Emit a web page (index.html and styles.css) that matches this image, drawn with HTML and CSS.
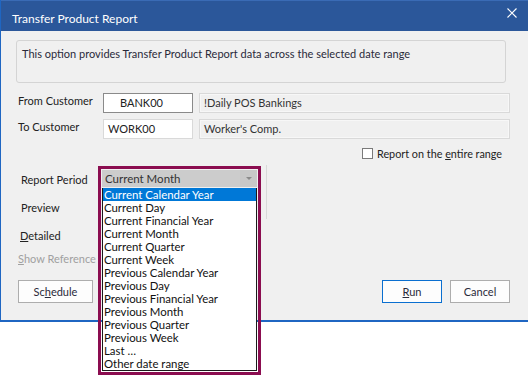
FILE: index.html
```html
<!DOCTYPE html>
<html>
<head>
<meta charset="utf-8">
<link rel="stylesheet" href="styles.css">
</head>
<body>
<div class="window">
  <div class="titlebar">
    <span class="title">Transfer Product Report</span>
    <svg class="close" width="10" height="10" viewBox="0 0 10 10"><path d="M0.5 0.5 L9.5 9.5 M9.5 0.5 L0.5 9.5" stroke="#fff" stroke-width="1.1" fill="none"/></svg>
  </div>
  <div class="content">
    <div class="desc">This option provides Transfer Product Report data across the selected date range</div>

    <div class="field-row first">
      <span class="field-label">From Customer</span>
      <div class="code code-focus">BANK00</div>
      <div class="name">!Daily POS Bankings</div>
    </div>
    <div class="field-row second">
      <span class="field-label">To Customer</span>
      <div class="code">WORK00</div>
      <div class="name">Worker's Comp.</div>
    </div>

    <div class="check-row">
      <span class="checkbox"></span>
      <span class="check-label">Report on the <u>e</u>ntire range</span>
    </div>

    <div class="lower">
      <div class="labels">
        <div class="lbl">Report Period</div>
        <div class="lbl">Preview</div>
        <div class="lbl lbl-det"><u>D</u>etailed</div>
        <div class="lbl lbl-show"><u>S</u>how Reference</div>
      </div>
      <div class="combo-col">
        <div class="combo">
          <span class="combo-text">Current Month</span>
          <span class="combo-btn"><span class="arrow"></span></span>
          <div class="frame"></div>
          <ul class="list">
            <li class="sel">Current Calendar Year</li>
            <li>Current Day</li>
            <li>Current Financial Year</li>
            <li>Current Month</li>
            <li>Current Quarter</li>
            <li>Current Week</li>
            <li>Previous Calendar Year</li>
            <li>Previous Day</li>
            <li>Previous Financial Year</li>
            <li>Previous Month</li>
            <li>Previous Quarter</li>
            <li>Previous Week</li>
            <li>Last …</li>
            <li>Other date range</li>
          </ul>
        </div>
      </div>
      <div class="sep"></div>
    </div>

    <div class="buttons">
      <div class="btn btn-sched">Sc<u>h</u>edule</div>
      <div class="btn btn-run"><u>R</u>un</div>
      <div class="btn btn-cancel">Cancel</div>
    </div>
  </div>
</div>
</body>
</html>
```
FILE: styles.css
```css
html, body {
  margin: 0;
  padding: 0;
  background: #ffffff;
}
body {
  font-family: "Lato", "Open Sans", sans-serif;
  font-size: 11px;
  color: #222;
  width: 528px;
  height: 376px;
  overflow: hidden;
}
.window {
  width: 528px;
  height: 322px;
  box-sizing: border-box;
  background: #f0f0f0;
  border-left: 1px solid #1f66c2;
  border-bottom: 2px solid #1f66c2;
}
.titlebar {
  height: 31px;
  background: #2b579a;
  border-top: 1px solid #3a6bb5;
  box-sizing: border-box;
  display: flex;
  justify-content: space-between;
  align-items: flex-start;
  padding: 0 11px 0 11px;
  color: #fff;
}
.title {
  font-size: 12px;
  margin-top: 11px;
  line-height: 14px;
}
.close {
  margin-top: 7px;
}
.content {
  padding: 9px 18px 0 15px;
}
.desc {
  width: 490px;
  height: 43px;
  box-sizing: border-box;
  border: 1px solid #d4d4d4;
  border-radius: 3px;
  padding: 6px 5px;
  line-height: 14px;
  color: #2a2a3a;
}
.field-row {
  display: flex;
  align-items: flex-start;
  height: 20px;
}
.field-row.first { margin-top: 10px; }
.field-row.second { margin-top: 6px; }
.field-label {
  width: 85px;
  margin-left: 2px;
  line-height: 14px;
  padding-top: 1px;
}
.code {
  width: 90px;
  height: 20px;
  box-sizing: border-box;
  background: #fff;
  border: 1px solid #d9d9d9;
  padding-left: 4px;
  line-height: 18px;
  color: #222;
}
.code-focus {
  border-color: #8a8a8a;
  padding-left: 16px;
}
.name {
  width: 311px;
  height: 20px;
  margin-left: 6px;
  box-sizing: border-box;
  background: #f0f0f0;
  border: 1px solid #d9d9d9;
  box-shadow: inset 0 0 0 1px #f7f7f7;
  padding-left: 4px;
  line-height: 18px;
  color: #333;
}
.check-row {
  display: flex;
  align-items: center;
  margin-top: 9px;
  margin-left: 346px;
  height: 11px;
}
.checkbox {
  width: 11px;
  height: 11px;
  box-sizing: border-box;
  border: 1px solid #7a7a7a;
  background: #fff;
}
.check-label {
  margin-left: 4px;
  line-height: 14px;
  font-size: 10.8px;
  white-space: nowrap;
}
.lower {
  display: flex;
  align-items: flex-start;
  margin-top: 6px;
}
.labels {
  width: 86px;
}
.lbl {
  height: 28px;
  box-sizing: border-box;
  padding-top: 8px;
  padding-left: 5px;
  line-height: 14px;
  white-space: nowrap;
}
.lbl-det { padding-left: 4px; }
.lbl-show {
  height: 23px;
  padding-top: 3px;
  padding-left: 2px;
  color: #a0a0a0;
  width: 81px;
  overflow: hidden;
}
.combo-col {
  width: 155px;
  padding-top: 5px;
}
.combo {
  position: relative;
  height: 17px;
  background: #cccccc;
  display: flex;
  align-items: center;
  justify-content: space-between;
  z-index: 2;
}
.combo-text {
  padding-left: 3px;
  color: #333;
  font-size: 11.5px;
  line-height: 14px;
}
.combo-btn {
  width: 17px;
  height: 17px;
  display: flex;
  align-items: center;
  justify-content: center;
  background: #c8c8c8;
}
.arrow {
  width: 0;
  height: 0;
  border-left: 3px solid transparent;
  border-right: 3px solid transparent;
  border-top: 3px solid #8a8a8a;
}
.frame {
  position: absolute;
  left: -4px;
  top: -4px;
  width: 163px;
  height: 209px;
  box-sizing: border-box;
  border: 3px solid #8b0d50;
  pointer-events: none;
}
.list {
  position: absolute;
  left: 0;
  top: 18px;
  width: 155px;
  margin: 0;
  padding: 0;
  list-style: none;
  background: #fff;
  box-sizing: border-box;
  border: 1px solid #1a1a1a;
  border-top: none;
  font-size: 11.4px;
  color: #111;
}
.list li {
  height: 13px;
  line-height: 14px;
  padding-left: 1px;
  white-space: nowrap;
}
.list li.sel {
  background: #0078d7;
  color: #fff;
}
.sep {
  width: 1px;
  height: 54px;
  margin-left: 9px;
  background: #d9d9d9;
}
.buttons {
  display: flex;
  margin-top: 8px;
  gap: 8px;
}
.btn {
  width: 60px;
  height: 23px;
  box-sizing: border-box;
  border: 1px solid #adadad;
  background: #fdfdfd;
  text-align: center;
  line-height: 21px;
  color: #2a2a3a;
}
.btn-sched {
  width: 75px;
  margin-left: 2px;
}
.btn-run {
  margin-left: auto;
  border-color: #0a6fd0;
}
```
